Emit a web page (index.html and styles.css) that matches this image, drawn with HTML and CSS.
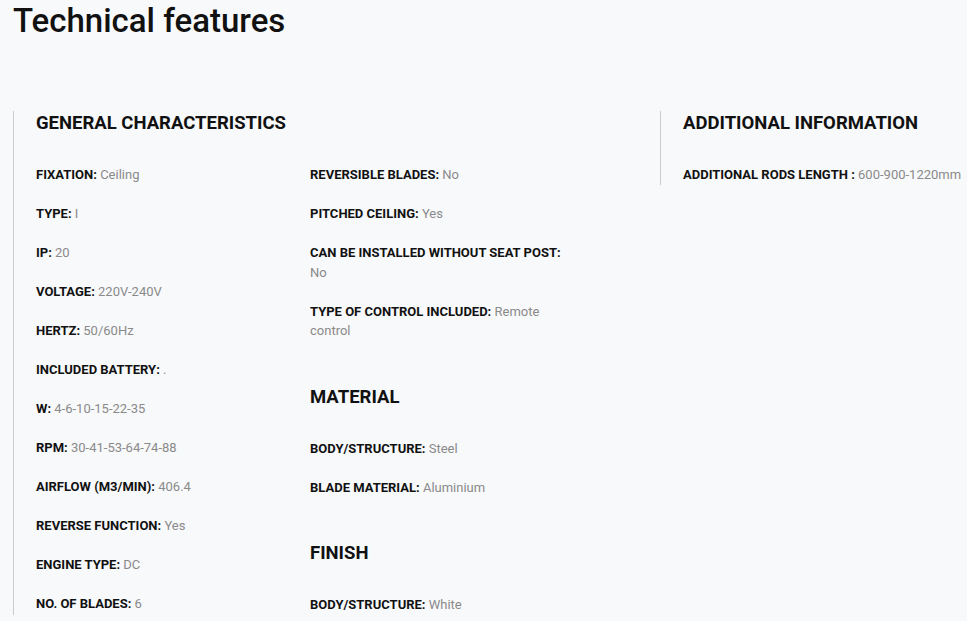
FILE: index.html
```html
<!DOCTYPE html>
<html lang="en">
<head>
<meta charset="utf-8">
<title>Technical features</title>
<link rel="stylesheet" href="styles.css">
</head>
<body>
<main class="page">
  <h1 class="title">Technical features</h1>
  <div class="features">
    <section class="block block-main">
      <div class="col">
        <h2 class="group-title">GENERAL CHARACTERISTICS</h2>
        <ul class="rows">
          <li><b>FIXATION:</b> Ceiling</li>
          <li><b>TYPE:</b> I</li>
          <li><b>IP:</b> 20</li>
          <li><b>VOLTAGE:</b> 220V-240V</li>
          <li><b>HERTZ:</b> 50/60Hz</li>
          <li><b>INCLUDED BATTERY:</b> .</li>
          <li><b>W:</b> 4-6-10-15-22-35</li>
          <li><b>RPM:</b> 30-41-53-64-74-88</li>
          <li><b>AIRFLOW (M3/MIN):</b> 406.4</li>
          <li><b>REVERSE FUNCTION:</b> Yes</li>
          <li><b>ENGINE TYPE:</b> DC</li>
          <li><b>NO. OF BLADES:</b> 6</li>
        </ul>
      </div>
      <div class="col col-second">
        <ul class="rows">
          <li><b>REVERSIBLE BLADES:</b> No</li>
          <li><b>PITCHED CEILING:</b> Yes</li>
          <li><b>CAN BE INSTALLED WITHOUT SEAT POST:</b> No</li>
          <li><b>TYPE OF CONTROL INCLUDED:</b> Remote control</li>
        </ul>
        <h2 class="group-title group-next">MATERIAL</h2>
        <ul class="rows">
          <li><b>BODY/STRUCTURE:</b> Steel</li>
          <li><b>BLADE MATERIAL:</b> Aluminium</li>
        </ul>
        <h2 class="group-title group-next">FINISH</h2>
        <ul class="rows">
          <li><b>BODY/STRUCTURE:</b> White</li>
        </ul>
      </div>
    </section>
    <section class="block block-side">
      <h2 class="group-title">ADDITIONAL INFORMATION</h2>
      <ul class="rows">
        <li><b>ADDITIONAL RODS LENGTH :</b> 600-900-1220mm</li>
      </ul>
    </section>
  </div>
</main>
</body>
</html>
```

FILE: styles.css
```css
html, body {
  margin: 0;
  padding: 0;
  background: #f8f9fb;
}
body {
  font-family: Roboto, "Liberation Sans", Arial, sans-serif;
  color: #111;
}
.page {
  padding: 2px 0 0 13px;
}
.title {
  margin: 0;
  font-size: 33px;
  font-weight: 500;
  line-height: 38px;
  color: #111;
}
.features {
  display: grid;
  grid-template-columns: 624px 1fr;
  column-gap: 23px;
  align-items: start;
  margin-top: 71px;
}
.block {
  border-left: 1px solid #c9cacc;
  padding-left: 22px;
}
.block-main {
  display: grid;
  grid-template-columns: 274px 274px;
}
.col-second {
  padding-top: 54px;
  padding-right: 14px;
}
.group-title {
  margin: 0 0 30px;
  font-size: 18.5px;
  line-height: 24px;
  font-weight: 700;
  color: #111;
}
.group-next {
  margin-top: 44px;
}
.rows {
  list-style: none;
  margin: 0;
  padding: 0;
}
.rows li {
  font-size: 13px;
  line-height: 19.5px;
  color: #8a8a8a;
  margin-bottom: 19.5px;
}
.rows li:last-child {
  margin-bottom: 0;
}
.rows b {
  color: #111;
  font-weight: 700;
}
```
